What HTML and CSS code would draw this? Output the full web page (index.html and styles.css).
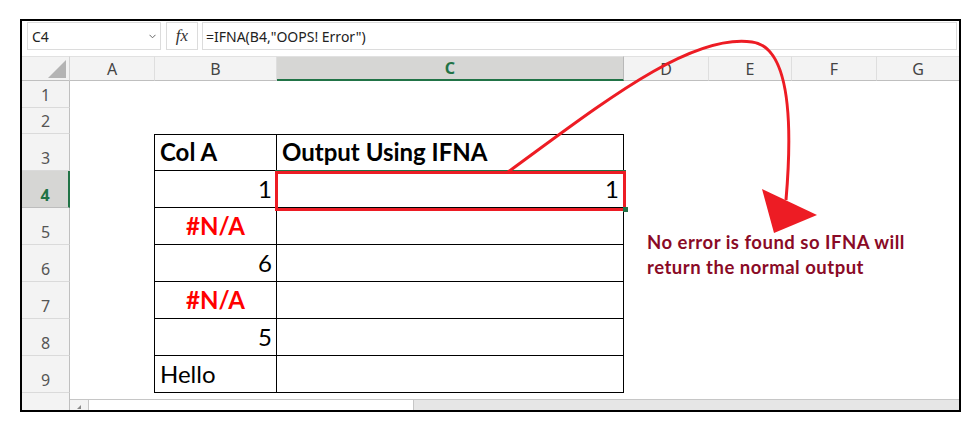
FILE: index.html
```html
<!DOCTYPE html>
<html>
<head>
<meta charset="utf-8">
<link rel="stylesheet" href="styles.css">
</head>
<body>
<div class="page">
  <div class="frame">
    <div class="fbar">
      <div class="namebox"><span>C4</span>
        <svg class="chev" width="7" height="5" viewBox="0 0 7 5"><polyline points="0.5,0.8 3.5,3.8 6.5,0.8" fill="none" stroke="#666" stroke-width="1"/></svg>
      </div>
      <div class="fxbox"><span class="fx">fx</span></div>
      <div class="formula">=IFNA(B4,"OOPS! Error")</div>
    </div>
    <div class="sheet">
      <div class="corner"><svg width="20" height="20" viewBox="0 0 20 20"><polygon points="19,1 19,19 1,19" fill="#b4b4b4"/></svg></div>
      <div class="ch">A</div>
      <div class="ch">B</div>
      <div class="ch sel">C</div>
      <div class="ch">D</div>
      <div class="ch">E</div>
      <div class="ch">F</div>
      <div class="ch last">G</div>

      <div class="rh">1</div><div class="c"></div><div class="c"></div><div class="c"></div><div class="c"></div><div class="c"></div><div class="c"></div><div class="c"></div>
      <div class="rh">2</div><div class="c"></div><div class="c"></div><div class="c"></div><div class="c"></div><div class="c"></div><div class="c"></div><div class="c"></div>

      <div class="rh">3</div><div class="c"></div><div class="t tl tt bold">Col A</div><div class="t tt bold">Output Using IFNA</div><div class="c"></div><div class="c"></div><div class="c"></div><div class="c"></div>
      <div class="rh rsel">4</div><div class="c"></div><div class="t tl num">1</div><div class="t num">1</div><div class="c"></div><div class="c"></div><div class="c"></div><div class="c"></div>
      <div class="rh">5</div><div class="c"></div><div class="t tl err">#N/A</div><div class="t"></div><div class="c"></div><div class="c"></div><div class="c"></div><div class="c"></div>
      <div class="rh">6</div><div class="c"></div><div class="t tl num">6</div><div class="t"></div><div class="c"></div><div class="c"></div><div class="c"></div><div class="c"></div>
      <div class="rh">7</div><div class="c"></div><div class="t tl err">#N/A</div><div class="t"></div><div class="c"></div><div class="c"></div><div class="c"></div><div class="c"></div>
      <div class="rh">8</div><div class="c"></div><div class="t tl num">5</div><div class="t"></div><div class="c"></div><div class="c"></div><div class="c"></div><div class="c"></div>
      <div class="rh">9</div><div class="c"></div><div class="t tl">Hello</div><div class="t"></div><div class="c"></div><div class="c"></div><div class="c"></div><div class="c"></div>

      <div class="rh foot"></div>
      <div class="scroll">
        <div class="sbtn"><svg width="6" height="6" viewBox="0 0 6 6"><polygon points="5,1 5,5 1,5" fill="#888"/></svg></div>
        <div class="strack"></div>
        <div class="srest"></div>
      </div>
    </div>
  </div>

  <div class="selbox"></div>
  <div class="handle"></div>

  <svg class="arrow" width="980" height="428" viewBox="0 0 980 428">
    <path d="M 508 172 C 600 105, 690 33, 752 42 C 792 47, 792 130, 786 200" fill="none" stroke="#ed1c24" stroke-width="3"/>
    <polygon points="762,189 817,215 774,233" fill="#ed1c24"/>
  </svg>

  <div class="note">No error is found so IFNA will<br>return the normal output</div>
</div>
</body>
</html>
```
FILE: styles.css
```css
html, body {
  margin: 0;
  padding: 0;
  background: #fff;
}
.page {
  position: relative;
  width: 980px;
  height: 428px;
  overflow: hidden;
}
.frame {
  margin: 19px 0 0 20px;
  width: 941px;
  height: 393px;
  box-sizing: border-box;
  border: 2px solid #000;
  display: flex;
  flex-direction: column;
  background: #fff;
}
.fbar {
  height: 35px;
  box-sizing: border-box;
  padding: 1px 2px 0 5px;
  display: flex;
  align-items: flex-start;
  gap: 5px;
  font-family: "Noto Sans", sans-serif;
  font-size: 14px;
  color: #222;
}
.namebox, .fxbox, .formula {
  height: 28px;
  box-sizing: border-box;
  border: 1px solid #dcdcdc;
  background: #fff;
  display: flex;
  align-items: center;
}
.namebox {
  width: 134px;
  padding: 0 4px 0 4px;
  justify-content: space-between;
}
.chev {
  margin-top: 1px;
}
.fxbox {
  width: 32px;
  justify-content: center;
}
.fx {
  font-family: "Liberation Serif", serif;
  font-style: italic;
  font-size: 17px;
  color: #333;
}
.formula {
  flex: 1;
  margin-left: -1px;
  padding-left: 3px;
  font-size: 14px;
}
.sheet {
  flex: 1;
  display: grid;
  grid-template-columns: 48px 85px 122px 347px 85px 83px 85px 1fr;
  grid-template-rows: 25px 27px 26px repeat(7, 37px) 1fr;
  font-family: "Noto Sans", sans-serif;
}
.corner {
  background: #f3f3f3;
  border-top: 1px solid #e1e1e1;
  border-bottom: 1px solid #bfbfbf;
  border-right: 1px solid #d4d4d4;
  box-sizing: border-box;
  display: flex;
  justify-content: flex-end;
  align-items: flex-end;
  padding: 0 2px 1px 0;
}
.ch {
  background: #f3f3f3;
  border-top: 1px solid #e1e1e1;
  border-bottom: 1px solid #bfbfbf;
  border-right: 1px solid #dedede;
  box-sizing: border-box;
  display: flex;
  align-items: center;
  justify-content: center;
  font-size: 16px;
  color: #444;
}
.ch.last {
  border-right: none;
}
.ch.sel {
  background: #d6d6d4;
  border-bottom: 2px solid #217346;
  border-right: 1px solid #b8b8b8;
  color: #217346;
  font-weight: 700;
}
.rh {
  background: #f3f3f3;
  border-right: 1px solid #bfbfbf;
  border-bottom: 1px solid #dadada;
  box-sizing: border-box;
  display: flex;
  align-items: flex-end;
  justify-content: center;
  padding-bottom: 4px;
  font-size: 16px;
  line-height: 16px;
  color: #555;
}
.rh.rsel {
  background: #d6d6d4;
  border-right: 2px solid #217346;
  border-bottom: 1px solid #bdbdbd;
  color: #217346;
  font-weight: 700;
}
.rh.foot {
  border-bottom: none;
}
.c {
  background: #fff;
}
.t {
  box-sizing: border-box;
  border-right: 1px solid #000;
  border-bottom: 1px solid #000;
  display: flex;
  align-items: flex-end;
  padding: 0 5px 6px 5px;
  font-family: Lato, "Liberation Sans", sans-serif;
  font-size: 24px;
  line-height: 24px;
  color: #000;
}
.t.tl {
  border-left: 1px solid #000;
  margin-left: -1px;
}
.t.tt {
  border-top: 1px solid #000;
}
.bold {
  font-weight: 700;
}
.num {
  justify-content: flex-end;
  padding-right: 4px;
}
.err {
  justify-content: center;
  color: #ff0000;
  font-weight: 700;
}
.scroll {
  grid-column: 2 / 9;
  display: flex;
  margin-top: 6px;
  border-top: 1px solid #c6c6c6;
  background: #e6e6e6;
}
.sbtn {
  width: 18px;
  background: #f3f3f3;
  border-right: 1px solid #c6c6c6;
  display: flex;
  align-items: flex-end;
  justify-content: center;
}
.strack {
  width: 324px;
  background: #fff;
  border-right: 1px solid #c6c6c6;
}
.srest {
  flex: 1;
}
.selbox {
  position: absolute;
  left: 275px;
  top: 171px;
  width: 351px;
  height: 40px;
  box-sizing: border-box;
  border: 3px solid #ed1c24;
  box-shadow: 0 -1px 0 #217346;
}
.handle {
  position: absolute;
  left: 623px;
  top: 207px;
  width: 5px;
  height: 5px;
  background: #217346;
}
.arrow {
  position: absolute;
  left: 0;
  top: 0;
  pointer-events: none;
}
.note {
  position: absolute;
  left: 647px;
  top: 230px;
  font-family: Lato, "Liberation Sans", sans-serif;
  font-weight: 700;
  font-size: 18.5px;
  letter-spacing: 0.5px;
  line-height: 25px;
  color: #8a0a26;
  white-space: nowrap;
}
```
